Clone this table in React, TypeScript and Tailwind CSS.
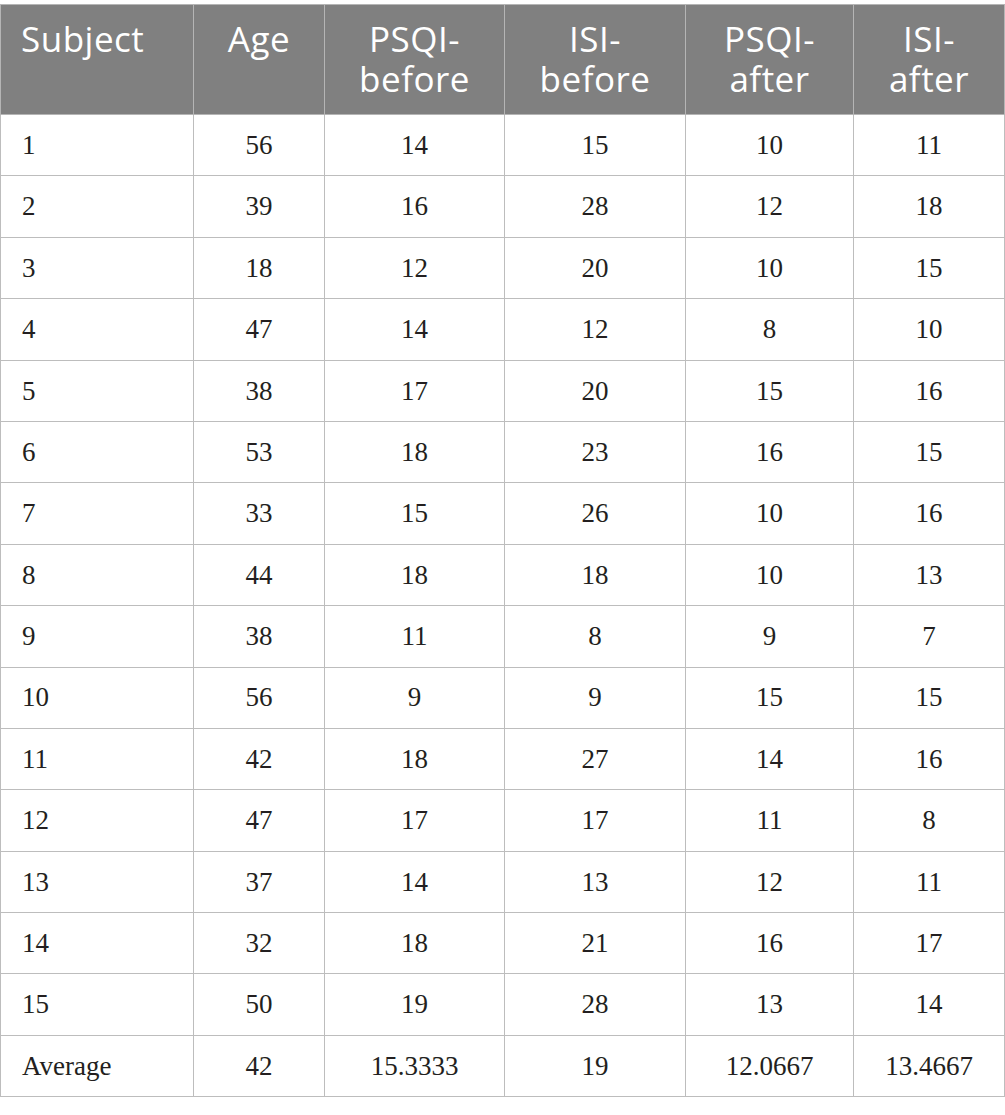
const columns = [
  { label: ["Subject"], width: "w-[193px]" },
  { label: ["Age"], width: "w-[131px]" },
  { label: ["PSQI-", "before"], width: "w-[180px]" },
  { label: ["ISI-", "before"], width: "w-[181px]" },
  { label: ["PSQI-", "after"], width: "w-[168px]" },
  { label: ["ISI-", "after"], width: "w-[151px]" },
];

const rows: string[][] = [
  ["1", "56", "14", "15", "10", "11"],
  ["2", "39", "16", "28", "12", "18"],
  ["3", "18", "12", "20", "10", "15"],
  ["4", "47", "14", "12", "8", "10"],
  ["5", "38", "17", "20", "15", "16"],
  ["6", "53", "18", "23", "16", "15"],
  ["7", "33", "15", "26", "10", "16"],
  ["8", "44", "18", "18", "10", "13"],
  ["9", "38", "11", "8", "9", "7"],
  ["10", "56", "9", "9", "15", "15"],
  ["11", "42", "18", "27", "14", "16"],
  ["12", "47", "17", "17", "11", "8"],
  ["13", "37", "14", "13", "12", "11"],
  ["14", "32", "18", "21", "16", "17"],
  ["15", "50", "19", "28", "13", "14"],
  ["Average", "42", "15.3333", "19", "12.0667", "13.4667"],
];

export default function App() {
  return (
    <div className="bg-white w-[1005px] min-h-[1115px] pt-[4px]">
      <table className="table-fixed border-collapse w-[1004px] border border-[#bdbdbd]">
        <thead>
          <tr className="bg-[#808080]">
            {columns.map((col, i) => (
              <th
                key={i}
                className={`${col.width} h-[110px] align-top pt-[14px] border border-[#b5b5b5] font-normal text-white text-[35px] tracking-[0.5px] leading-[40px] font-['Open_Sans',sans-serif] ${
                  i === 0 ? "text-left pl-[20px]" : "text-center"
                }`}
              >
                {col.label.map((line, j) => (
                  <div key={j}>{line}</div>
                ))}
              </th>
            ))}
          </tr>
        </thead>
        <tbody>
          {rows.map((row, r) => (
            <tr key={r} className="h-[61.4px]">
              {row.map((cell, c) => (
                <td
                  key={c}
                  className={`border border-[#bdbdbd] text-[27px] text-[#231f20] font-['Liberation_Serif',serif] align-middle ${
                    c === 0 ? "text-left pl-[21px]" : "text-center"
                  }`}
                >
                  {cell}
                </td>
              ))}
            </tr>
          ))}
        </tbody>
      </table>
    </div>
  );
}
